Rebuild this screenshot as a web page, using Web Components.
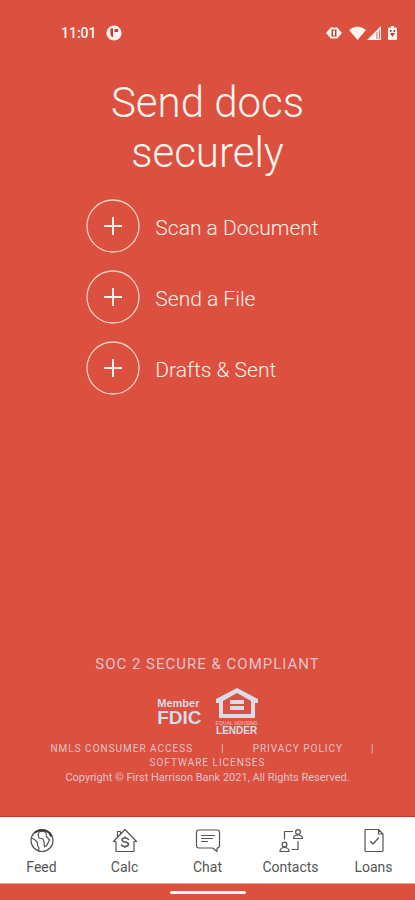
<!DOCTYPE html>
<html lang="en">
<head>
<meta charset="utf-8">
<meta name="viewport" content="width=device-width, initial-scale=1">
<title>Send docs securely</title>
<style>
  body { margin: 0; font-family: Roboto, "Liberation Sans", sans-serif; background: #db503f; }
</style>
</head>
<body>
<docs-app></docs-app>
<script>
const define = (name, html) => {
  const template = document.createElement('template');
  template.innerHTML = html;
  customElements.define(name, class extends HTMLElement {
    constructor() {
      super();
      this.attachShadow({ mode: 'open' }).append(template.content.cloneNode(true));
    }
  });
};

define('status-bar', `
<style>
  :host { display: flex; justify-content: space-between; align-items: center; height: 26px; padding: 20px 18px 0 61px; color: #fff4f0; }
  div { display: flex; align-items: center; }
  .left { gap: 9px; font-size: 14px; line-height: 20px; font-weight: 500; }
  .right { gap: 1px; }
  .vibrate { margin-right: 6px; }
  .battery { margin-left: 6px; }
  svg { display: block; fill: currentColor; }
</style>
<div class="left"><span>11:01</span>
  <svg width="16" height="16" viewBox="0 0 16 16"><circle cx="8" cy="8" r="7.6"/><path fill="#c93a2b" d="M4.500 3.500H7V12H6C4.500 10.500 4.500 9 4.500 8zM8.500 4H12v3H8.500z"/></svg>
</div>
<div class="right">
  <svg class="vibrate" width="16" height="14" viewBox="0 0 16 14"><path d="M0 7l4-4.500Q4 1.500 5 1.500h6q1 0 1 1L16 7l-4 4.500q0 1-1 1H5q-1 0-1-1z"/><path fill="#c93a2b" d="M5.500 3.500h5v7h-5z"/><path d="M7 4.500h2v5H7z"/></svg>
  <svg width="17" height="14" viewBox="0 0 17 14"><path d="M0 4Q8.500-3 17 4L8.500 14z"/></svg>
  <svg width="14" height="14" viewBox="0 0 14 14"><path d="M14 0v14H0z"/><path fill="#c96f61" d="M9.500 6h1v7h-1zM12 4h1v9h-1z"/></svg>
  <svg class="battery" width="9" height="14" viewBox="0 0 9 14"><path d="M3 0h3v1.500h2q1 0 1 1V13q0 1-1 1H1q-1 0-1-1V2.500q0-1 1-1h2z"/><path fill="#c93a2b" d="M2 4h1.500v2H2zM5.500 4H7v2H5.500zM2 7h5L4.500 11z"/></svg>
</div>`);

define('action-item', `
<style>
  :host { display: block; }
  button { display: flex; align-items: center; gap: 15px; width: 100%; padding: 0; border: 0; background: none; font: inherit; font-size: 21px; line-height: 28px; font-weight: 300; color: #fff0ea; text-align: left; cursor: pointer; }
  svg { display: block; flex: none; fill: none; stroke: currentColor; }
  span { padding-top: 3px; }
</style>
<button type="button">
  <svg width="54" height="54" viewBox="0 0 54 54" aria-hidden="true"><circle cx="27" cy="27" r="26" stroke-width="1.300" stroke="#fbd3c8"/><path d="M18 27h18M27 18v18" stroke-width="2"/></svg>
  <span><slot></slot></span>
</button>`);

define('legal-footer', `
<style>
  :host { display: block; text-align: center; color: #e3c2c9; padding: 0 32px 30px; }
  p { margin: 0; }
  .soc { font-size: 15px; line-height: 20px; letter-spacing: 1px; }
  .logos { display: flex; justify-content: center; gap: 14px; height: 48px; padding: 14px 0 4px; color: #d9dbe8; }
  svg { display: block; fill: currentColor; }
  .fdic { font-family: "Liberation Sans", sans-serif; font-weight: 700; align-self: center; text-align: left; }
  .member { font-size: 11px; line-height: 12px; }
  .big { font-size: 19px; line-height: 18px; }
  .house { display: flex; flex-direction: column; align-items: center; font-family: "Liberation Sans", sans-serif; font-weight: 700; }
  .equal { font-size: 5px; line-height: 6px; padding-top: 1px; color: #e3a9a8; }
  .lender { font-size: 10px; line-height: 10px; }
  .links { display: flex; flex-wrap: wrap; justify-content: center; font-size: 10px; line-height: 14px; letter-spacing: 1px; padding-top: 2px; }
  .links i { font-style: normal; padding: 0 28px; }
  .links i.end { padding-right: 0; }
  .links a:first-child { padding-left: 10px; }
  a { color: inherit; text-decoration: none; }
  .copy { font-size: 11px; line-height: 16px; }
</style>
<p class="soc">SOC 2 SECURE &amp; COMPLIANT</p>
<div class="logos">
  <div class="fdic"><div class="member">Member</div><div class="big">FDIC</div></div>
  <div class="house">
    <svg width="42" height="32" viewBox="0 0 42 31" aria-hidden="true"><path fill-rule="evenodd" d="M21 0L42 11v4h-3v15H3V15H0v-4zM21 5L7 13v13h28V13zM14 12h14v4H14zM14 18h14v4H14z"/></svg>
    <div class="equal">EQUAL HOUSING</div><div class="lender">LENDER</div>
  </div>
</div>
<div class="links"><a href="#nmls">NMLS CONSUMER ACCESS</a><i>|</i><a href="#privacy">PRIVACY POLICY</a><i class="end">|</i><a href="#licenses">SOFTWARE LICENSES</a></div>
<p class="copy">Copyright © First Harrison Bank 2021, All Rights Reserved.</p>`);

define('nav-item', `
<style>
  :host { display: block; flex: 1 1 0; min-width: 0; }
  a { display: flex; flex-direction: column; align-items: center; gap: 4px; padding-top: 11px; color: #555; text-decoration: none; font-size: 14px; line-height: 18px; }
</style>
<a href="#"><slot name="icon"></slot><span><slot></slot></span></a>`);

define('tab-bar', `
<style>
  :host { display: flex; background: #fff; border-top: 1px solid #c8371f; border-bottom: 1px solid #e8a49b; height: 66px; }
  svg { display: block; fill: none; stroke: #555; stroke-width: 1.200; stroke-linejoin: round; stroke-linecap: round; }
</style>
<nav-item><svg slot="icon" width="26" height="26" viewBox="0 0 26 26"><circle cx="13" cy="12.500" r="11"/><path d="M10.500 3.500l-1.500 3 1 3.500 4 1 1 3 .500 5q2.500-1 3.500-4l1.500-3-3-3.500-.500-4-3-1.500zM2.500 10l3 1.500 3 3v3l1.500 2.500-.500 3"/><path d="M6 4.500l4-2h6l4 2 2 3.500" stroke="#333" stroke-width="1.800"/></svg>Feed</nav-item>
<nav-item><svg slot="icon" width="26" height="26" viewBox="0 0 26 26"><path d="M1.500 13.500L13 1.500 24.500 13.500H22v10H4v-10zM5.500 9V3.500h3V6"/><path d="M16.500 11.500q-1-1.500-3.500-1.500-3 0-3 2 0 1.700 3 2t3.500 2q0 2.500-3.500 2.500-2.500 0-3.500-1.500M13 9v1M13 18.500v1" stroke-width="1.500"/></svg>Calc</nav-item>
<nav-item><svg slot="icon" width="26" height="26" viewBox="0 0 26 26"><path d="M4 2h18q2.500 0 2.500 2.500v13q0 2.500-2.500 2.500v3.500L17.500 20H4q-2.500 0-2.500-2.500v-13Q1.500 2 4 2zM6.500 7.500h13M6.500 10.500h11M6.500 13.500h6"/></svg>Chat</nav-item>
<nav-item><svg slot="icon" width="26" height="26" viewBox="0 0 26 26"><path d="M6.500 11V3.500h8M20 13.500v8h-6"/><circle cx="20" cy="4" r="2.400"/><path d="M15.500 10.500q0-3.500 4.500-3.500t4.500 3.500z"/><circle cx="6.500" cy="16.500" r="2.400"/><path d="M2 23.500q0-4 4.500-4t4.500 4z"/></svg>Contacts</nav-item>
<nav-item><svg slot="icon" width="26" height="26" viewBox="0 0 26 26"><path d="M5 1.500h12.500l4.500 4.500v16.500q0 1-1 1H5q-1 0-1-1v-20q0-1 1-1zM17.500 1.500V6H22M9.500 13.500l2.500 2.500 5.500-6"/></svg>Loans</nav-item>`);

define('docs-app', `
<style>
  :host { display: flex; flex-direction: column; min-height: 100vh; }
  main { flex: 1; display: flex; flex-direction: column; padding-top: 32px; }
  h1 { margin: 0 auto; max-width: 240px; text-align: center; font-size: 42px; line-height: 50px; font-weight: 300; color: #fff4ee; }
  .actions { display: flex; flex-direction: column; gap: 17px; align-self: center; padding-top: 21px; margin-right: 10px; }
  legal-footer { margin-top: auto; }
  .home { display: flex; justify-content: center; align-items: center; height: 16px; }
  .home::before { content: ""; width: 76px; height: 3px; border-radius: 2px; background: #fff4f0; }
</style>
<status-bar></status-bar>
<main>
  <h1>Send docs securely</h1>
  <div class="actions">
    <action-item>Scan a Document</action-item>
    <action-item>Send a File</action-item>
    <action-item>Drafts &amp; Sent</action-item>
  </div>
  <legal-footer></legal-footer>
</main>
<tab-bar></tab-bar>
<div class="home"></div>`);
</script>
</body>
</html>
